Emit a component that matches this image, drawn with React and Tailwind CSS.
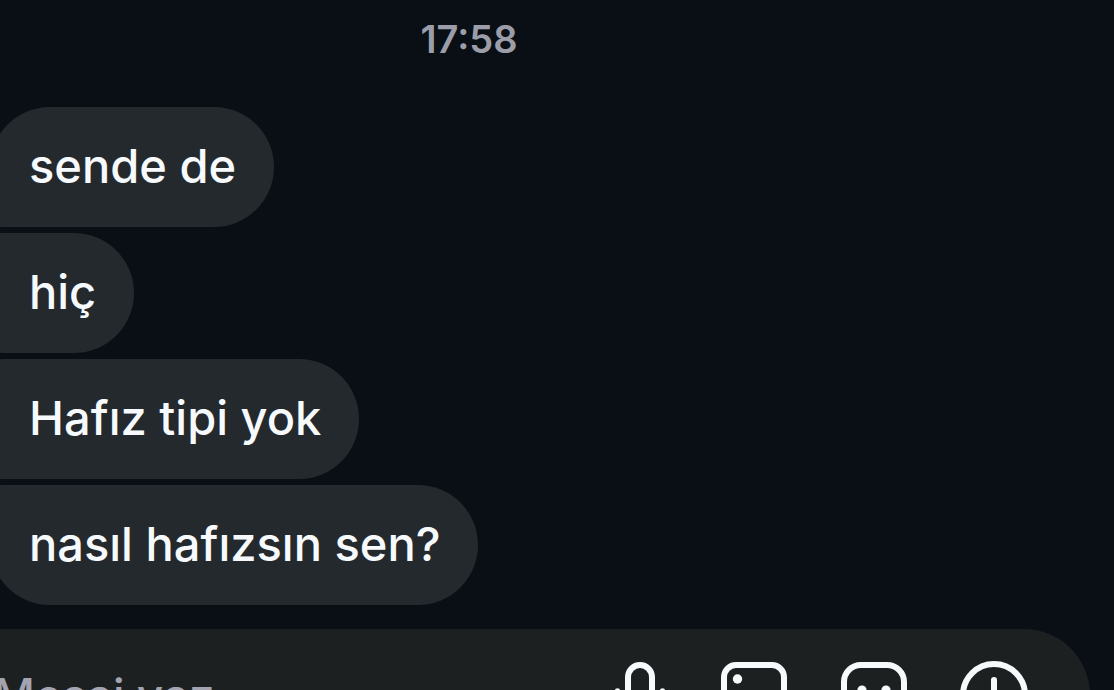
const messages = [
  { text: 'sende de', shape: 'rounded-tl-[60px] rounded-bl-xl' },
  { text: 'hiç', shape: 'rounded-l-xl' },
  { text: 'Hafız tipi yok', shape: 'rounded-l-xl' },
  { text: 'nasıl hafızsın sen?', shape: 'rounded-tl-xl rounded-bl-[60px]' },
];

function MicIcon() {
  return (
    <svg width="60" height="72" viewBox="0 0 60 72" fill="none" stroke="currentColor" strokeWidth="6" strokeLinecap="round" aria-hidden="true">
      <rect x="18" y="6" width="24" height="38" rx="12" />
      <path d="M7.5 32v1a22.5 22.5 0 0 0 45 0v-1M30 55.5v12" strokeWidth="5.5" />
    </svg>
  );
}

function PhotoIcon() {
  return (
    <svg width="72" height="72" viewBox="0 0 72 72" fill="none" stroke="currentColor" strokeWidth="6" strokeLinecap="round" strokeLinejoin="round" aria-hidden="true">
      <rect x="6" y="6" width="60" height="60" rx="12" />
      <circle cx="19.5" cy="20" r="4.7" fill="currentColor" stroke="none" />
      <path d="M6 54l16-14 12 11 14-15 18 17" />
    </svg>
  );
}

function StickerIcon() {
  return (
    <svg width="72" height="72" viewBox="0 0 72 72" fill="none" stroke="currentColor" strokeWidth="6" strokeLinecap="round" strokeLinejoin="round" aria-hidden="true">
      <path d="M66 40V23A17 17 0 0 0 49 6H23A17 17 0 0 0 6 23v26a17 17 0 0 0 17 17h17z" />
      <circle cx="24" cy="31" r="4.6" fill="currentColor" stroke="none" />
      <circle cx="48" cy="31" r="4.6" fill="currentColor" stroke="none" />
      <path d="M24 44c6 6 16 6 22 0" />
    </svg>
  );
}

function PlusIcon() {
  return (
    <svg width="72" height="72" viewBox="0 0 72 72" fill="none" stroke="currentColor" strokeWidth="6" strokeLinecap="round" aria-hidden="true">
      <circle cx="36" cy="36" r="31" />
      <path d="M36 21v30M21 36h30" />
    </svg>
  );
}

const actions = [
  { label: 'Sesli mesaj', Icon: MicIcon },
  { label: 'Fotoğraf', Icon: PhotoIcon },
  { label: 'Çıkartma', Icon: StickerIcon },
  { label: 'Ekle', Icon: PlusIcon },
];

export default function App() {
  return (
    <div className="h-screen overflow-hidden bg-[#0a0e15] font-['Inter','Liberation_Sans',sans-serif]">
      <main className="-ml-44 flex flex-col">
        <time className="pt-[15px] text-center text-[38px] leading-[48px] font-semibold text-[#9b9ea8]">17:58</time>
        <ul className="mt-11 flex flex-col items-start gap-[6px] pl-[166px]">
          {messages.map(({ text, shape }) => (
            <li
              key={text}
              className={`rounded-r-[60px] bg-[#24292e] pr-[38px] pl-[39px] pt-[29px] pb-[31px] text-[47px] leading-[60px] font-medium whitespace-nowrap text-[#f7fafc] ${shape}`}
            >
              {text}
            </li>
          ))}
        </ul>
        <form className="mx-6 mt-6 flex h-[132px] items-center rounded-[66px] bg-[#1d2021] pr-[60px] pl-[145px]" onSubmit={(e) => e.preventDefault()}>
          <input
            type="text"
            aria-label="Mesaj yaz"
            placeholder="Mesaj yaz..."
            className="min-w-0 flex-1 bg-transparent text-[46px] leading-[60px] font-medium text-[#f7fafc] outline-none placeholder:text-[#a3a4b1]"
          />
          <div className="flex gap-12 text-[#f7fafc]">
            {actions.map(({ label, Icon }) => (
              <button key={label} type="button" aria-label={label}>
                <Icon />
              </button>
            ))}
          </div>
        </form>
      </main>
    </div>
  );
}
